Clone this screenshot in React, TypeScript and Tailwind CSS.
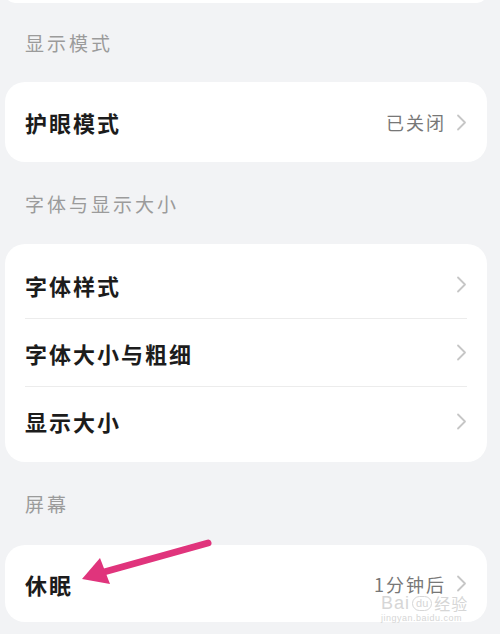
import React from 'react';

const font = { fontFamily: '"Noto Sans CJK SC", "Noto Sans", sans-serif' };

const Chevron: React.FC = () => (
  <svg width="11" height="17" viewBox="0 0 11 17" className="shrink-0">
    <polyline points="2,1.5 9,8.5 2,15.5" fill="none" stroke="#c6c6c6" strokeWidth="1.8" strokeLinecap="round" strokeLinejoin="round" />
  </svg>
);

const Header: React.FC<{ title: string; h: string }> = ({ title, h }) => (
  <div className={`flex items-center px-[25px] ${h}`}>
    <span className="text-[19px] tracking-[3px] text-[#9b9b9b] leading-none">{title}</span>
  </div>
);

const Row: React.FC<{ label: string; value?: string; h: string; divider?: boolean }> = ({ label, value, h, divider }) => (
  <div className={`mx-[20px] flex items-center ${h} ${divider ? 'border-b border-[#ececec]' : ''}`}>
    <span className="flex-1 text-[22px] font-bold tracking-[2px] text-[#1c1c1c] leading-none">{label}</span>
    {value && <span className="mr-[10px] text-[18px] tracking-[2px] text-[#777] leading-none">{value}</span>}
    <Chevron />
  </div>
);

const App: React.FC = () => {
  return (
    <div className="relative w-[500px] h-[634px] overflow-hidden bg-[#f2f3f5]" style={font}>
      {/* previous card, only its bottom edge is visible */}
      <div className="mx-[5px] w-[482px] h-[20px] -mt-[17px] rounded-[20px] bg-white" />

      <Header title="显示模式" h="h-[79px]" />
      <div className="ml-[5px] w-[482px] rounded-[20px] bg-white py-[7px]">
        <Row label="护眼模式" value="已关闭" h="h-[66px]" />
      </div>

      <Header title="字体与显示大小" h="h-[82px]" />
      <div className="ml-[5px] w-[482px] rounded-[20px] bg-white py-[7px]">
        <Row label="字体样式" h="h-[68px]" divider />
        <Row label="字体大小与粗细" h="h-[68px]" divider />
        <Row label="显示大小" h="h-[68px]" />
      </div>

      <Header title="屏幕" h="h-[83px]" />
      <div className="relative ml-[5px] w-[482px] rounded-[20px] bg-white py-[5px]">
        <Row label="休眠" value="1分钟后" h="h-[67px]" />

        {/* watermark */}
        <div className="absolute left-[376px] top-[49px] flex flex-col items-start text-[#d6d6d6] pointer-events-none" style={{ fontFamily: '"Liberation Sans", "Noto Sans CJK SC", sans-serif' }}>
          <div className="flex items-center leading-none">
            <span className="text-[18px] tracking-[1px]">Bai</span>
            <span className="mx-[2px] rounded-full border border-[#d6d6d6] px-[3px] text-[11px] leading-[13px]">du</span>
            <span className="text-[16px] tracking-[1px]" style={font}>经验</span>
          </div>
          <span className="mt-[2px] text-[9px] leading-none tracking-[0.5px]">jingyan.baidu.com</span>
        </div>
      </div>

      {/* pink annotation arrow */}
      <svg className="absolute left-0 top-0 pointer-events-none" width="500" height="634" viewBox="0 0 500 634">
        <line x1="208" y1="543" x2="104" y2="572" stroke="#e0347c" strokeWidth="7" strokeLinecap="round" />
        <polygon points="82,579 100,558 110,584" fill="#e0347c" />
      </svg>
    </div>
  );
};

export default App;
